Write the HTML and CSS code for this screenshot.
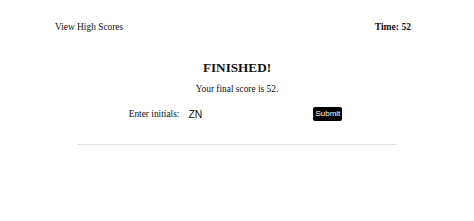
FILE: index.html
```html
<!DOCTYPE html>
<html>
<head>
<meta charset="utf-8">
<link rel="stylesheet" href="styles.css">
</head>
<body>
<header class="top">
  <a class="scores-link">View High Scores</a>
  <span class="timer">Time: 52</span>
</header>
<main class="result">
  <h2 class="title">FINISHED!</h2>
  <p class="score">Your final score is 52.</p>
  <form class="entry">
    <label class="entry-label">Enter initials:</label>
    <input class="entry-input" type="text" value="ZN">
    <button class="entry-btn" type="button">Submit</button>
  </form>
  <hr class="divider">
</main>
</body>
</html>
```

FILE: styles.css
```css
html, body {
  margin: 0;
  padding: 0;
  background: #fff;
}
body {
  font-family: "Liberation Serif", "Times New Roman", serif;
  font-size: 9.4px;
  color: #111;
  width: 474px;
  height: 221px;
  overflow: hidden;
}
.top {
  display: flex;
  justify-content: space-between;
  align-items: center;
  padding: 21px 63px 0 55px;
  line-height: 12px;
}
.scores-link {
  color: #111;
}
.timer {
  font-weight: bold;
  font-size: 9.6px;
}
.result {
  display: flex;
  flex-direction: column;
  align-items: center;
}
.title {
  margin: 27px 0 0;
  font-size: 13.2px;
  line-height: 16px;
  font-weight: bold;
}
.score {
  margin: 7px 0 0;
  line-height: 12px;
}
.entry {
  display: flex;
  align-items: center;
  margin-top: 12px;
  margin-right: 3px;
}
.entry-label {
  line-height: 12px;
}
.entry-input {
  width: 121px;
  height: 14px;
  margin-left: 7px;
  padding: 0 2px;
  border: none;
  outline: none;
  font-family: "Liberation Sans", Arial, sans-serif;
  font-size: 10.4px;
  color: #111;
  background: transparent;
}
.entry-btn {
  margin-left: 2px;
  height: 14px;
  padding: 0 2px;
  border: none;
  border-radius: 2px;
  background: #000;
  color: #fff;
  font-family: "Liberation Sans", Arial, sans-serif;
  font-size: 8px;
  line-height: 14px;
}
.divider {
  width: 318px;
  margin: 23px 0 0;
  border: none;
  border-top: 1px solid #ddd;
}
```
